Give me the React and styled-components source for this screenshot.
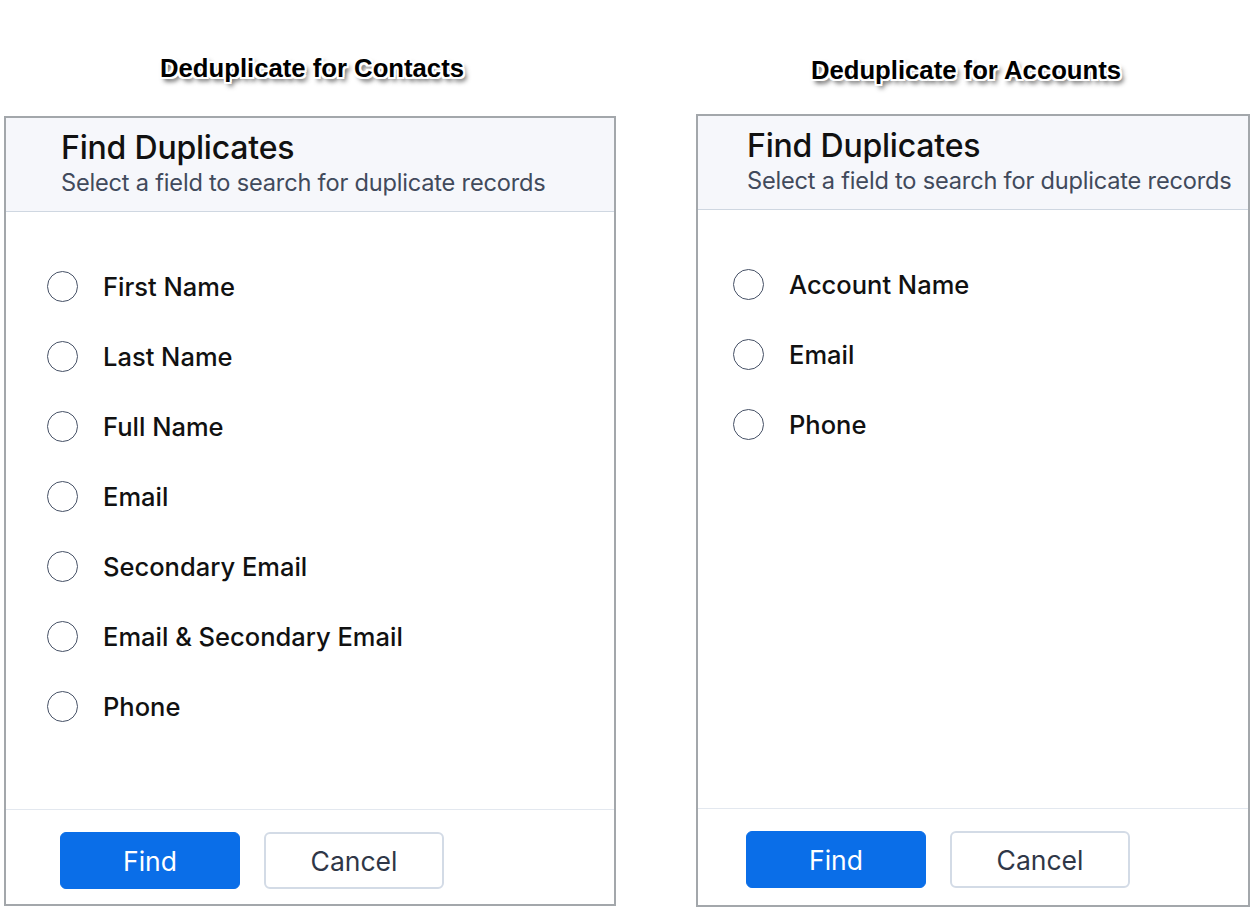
import React from "react";
import styled, { createGlobalStyle } from "styled-components";

const Global = createGlobalStyle`
  html, body { margin: 0; padding: 0; background: #ffffff; }
  body { font-family: "Inter", "Noto Sans", sans-serif; }
`;

const Page = styled.div`
  display: flex;
  align-items: flex-start;
  gap: 80px;
  padding-left: 4px;
  width: 1256px;
  height: 918px;
  box-sizing: border-box;
`;

const Column = styled.section`
  display: flex;
  flex-direction: column;
  width: ${(p) => p.$width}px;
  padding-top: ${(p) => p.$top}px;
`;

const Caption = styled.h2`
  margin: 0 0 ${(p) => p.$gap}px;
  height: 46px;
  line-height: 46px;
  text-align: center;
  font-family: "Liberation Sans", Arial, sans-serif;
  font-weight: 700;
  font-size: 25.7px;
  color: #000;
  transform: translateX(${(p) => p.$shift}px);
  text-shadow:
    -2px 0 #fff, 2px 0 #fff, 0 -2px #fff, 0 2px #fff,
    -2px -2px #fff, 2px 2px #fff, -2px 2px #fff, 2px -2px #fff,
    3px 4px 5px rgba(0, 0, 0, 0.8);
`;

const Panel = styled.div`
  display: flex;
  flex-direction: column;
  height: ${(p) => p.$height}px;
  border: 2px solid #a3a7ab;
  box-sizing: border-box;
  background: #fff;
`;

const Header = styled.header`
  background: #f6f7fb;
  border-bottom: 1px solid #cfd7e1;
  height: 94px;
  box-sizing: border-box;
  padding: 10px 0 0 ${(p) => p.$inset + 1}px;
`;

const Title = styled.div`
  font-size: 32px;
  font-weight: 500;
  color: #111;
  line-height: 40px;
  letter-spacing: -0.2px;
`;

const Subtitle = styled.div`
  font-size: 23.6px;
  color: #414a5c;
  line-height: 29px;
  letter-spacing: -0.2px;
`;

const Body = styled.div`
  flex: 1;
  display: flex;
  flex-direction: column;
  gap: 39px;
  padding: 59px 0 0 ${(p) => p.$inset - 13}px;
`;

const Option = styled.label`
  display: flex;
  align-items: center;
  gap: 25px;
  font-size: 25.5px;
  font-weight: 500;
  color: #111;
  line-height: 31px;
  cursor: pointer;
`;

const Circle = styled.span`
  width: 31px;
  height: 31px;
  border-radius: 50%;
  border: 1.6px solid #465166;
  box-sizing: border-box;
  flex-shrink: 0;
`;

const Footer = styled.footer`
  display: flex;
  gap: 24px;
  border-top: 1px solid #e3e8ef;
  padding: 22px 0 0 ${(p) => p.$inset}px;
  height: ${(p) => p.$height}px;
  box-sizing: border-box;
`;

const Button = styled.button`
  width: 180px;
  height: 57px;
  border-radius: 6px;
  font-family: "Inter", "Noto Sans", sans-serif;
  font-size: 26.5px;
  font-weight: 400;
  cursor: pointer;
  box-sizing: border-box;
  border: ${(p) => (p.$primary ? "1px solid #0a6ee8" : "2px solid #d3dbe6")};
  background: ${(p) => (p.$primary ? "#0a6ee8" : "#fff")};
  color: ${(p) => (p.$primary ? "#fff" : "#2f3747")};
`;

function Dialog({ caption, shift, gap, width, top, height, footerHeight, inset, options }) {
  return (
    <Column $width={width} $top={top}>
      <Caption $shift={shift} $gap={gap}>{caption}</Caption>
      <Panel $height={height}>
        <Header $inset={inset}>
          <Title>Find Duplicates</Title>
          <Subtitle>Select a field to search for duplicate records</Subtitle>
        </Header>
        <Body $inset={inset}>
          {options.map((o) => (
            <Option key={o}>
              <Circle />
              {o}
            </Option>
          ))}
        </Body>
        <Footer $inset={inset} $height={footerHeight}>
          <Button $primary>Find</Button>
          <Button>Cancel</Button>
        </Footer>
      </Panel>
    </Column>
  );
}

export default function App() {
  return (
    <>
      <Global />
      <Page>
        <Dialog
          caption="Deduplicate for Contacts"
          shift={2}
          gap={25}
          width={612}
          top={45}
          height={790}
          footerHeight={95}
          inset={54}
          options={[
            "First Name",
            "Last Name",
            "Full Name",
            "Email",
            "Secondary Email",
            "Email & Secondary Email",
            "Phone",
          ]}
        />
        <Dialog
          caption="Deduplicate for Accounts"
          shift={-7}
          gap={21}
          width={554}
          top={47}
          height={793}
          footerHeight={97}
          inset={48}
          options={["Account Name", "Email", "Phone"]}
        />
      </Page>
    </>
  );
}
